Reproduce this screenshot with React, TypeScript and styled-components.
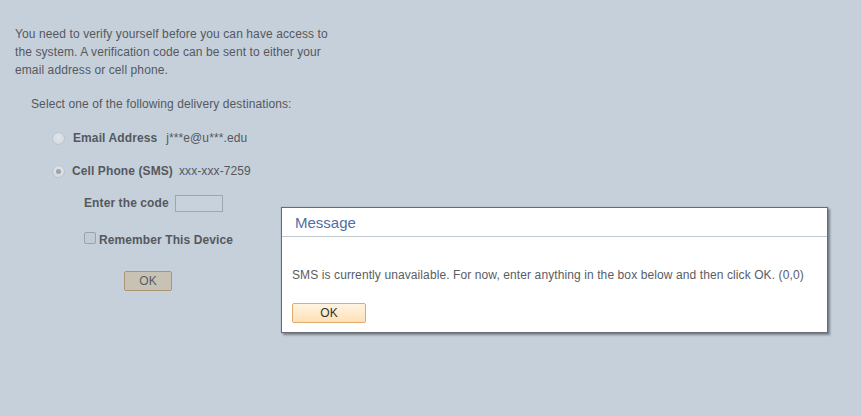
import React from "react";
import styled, { createGlobalStyle } from "styled-components";

const Global = createGlobalStyle`
  html, body { margin: 0; padding: 0; }
  body {
    background: #c5d0da;
    font-family: Arial, "Liberation Sans", sans-serif;
    font-size: 12px;
    letter-spacing: 0.1px;
    color: #55585e;
    width: 861px;
    height: 416px;
    overflow: hidden;
  }
`;

const Page = styled.div`
  position: relative;
  width: 861px;
  height: 416px;
  padding: 25px 0 0 15px;
  box-sizing: border-box;
`;

const Intro = styled.p`
  margin: 0;
  width: 325px;
  line-height: 18px;
`;

const Prompt = styled.div`
  margin: 17px 0 0 16px;
  line-height: 16px;
`;

const Options = styled.div`
  display: flex;
  flex-direction: column;
  gap: 17px;
  margin: 18px 0 0 37px;
`;

const Option = styled.label`
  display: flex;
  align-items: center;
  height: 16px;
`;

const Radio = styled.span<{ $checked?: boolean; $gap: number }>`
  width: 13px;
  height: 13px;
  margin-right: ${(p) => p.$gap}px;
  border-radius: 50%;
  border: 1px solid #bcc4cc;
  background: radial-gradient(circle at 50% 40%, #e2e6ea 0%, #d0d6dc 100%);
  box-sizing: border-box;
  display: flex;
  align-items: center;
  justify-content: center;
  &::after {
    content: "";
    width: 5px;
    height: 5px;
    border-radius: 50%;
    background: ${(p) => (p.$checked ? "#9ba2a9" : "transparent")};
  }
`;

const OptionLabel = styled.span<{ $gap: number }>`
  font-weight: bold;
  margin-right: ${(p) => p.$gap}px;
`;

const Value = styled.span``;

const Detail = styled.div`
  display: flex;
  flex-direction: column;
  margin: 16px 0 0 69px;
`;

const CodeRow = styled.div`
  display: flex;
  align-items: center;
  height: 18px;
  margin-top: -1px;
`;

const Bold = styled.span`
  font-weight: bold;
`;

const CodeInput = styled.span`
  display: inline-block;
  width: 48px;
  height: 17px;
  margin: 1px 0 0 6px;
  border: 1px solid #9ea6ae;
  box-sizing: border-box;
  background: #c8d2dc;
`;

const CheckRow = styled.label`
  display: flex;
  align-items: center;
  gap: 3px;
  margin-top: 20px;
  height: 16px;
`;

const Check = styled.span`
  width: 12px;
  height: 12px;
  border: 1px solid #9aa2aa;
  border-radius: 2px;
  background: #c2ccd6;
  box-sizing: border-box;
  margin-bottom: 4px;
`;

const PageOk = styled.button`
  margin: 23px 0 0 40px;
  width: 48px;
  height: 20px;
  padding: 0;
  font-family: Arial, "Liberation Sans", sans-serif;
  font-size: 12px;
  color: #5a5d63;
  background: #c7c2b4;
  border: 1px solid #ab9575;
  border-radius: 2px;
  box-sizing: border-box;
`;

const Dialog = styled.div`
  position: absolute;
  left: 281px;
  top: 207px;
  width: 547px;
  height: 126px;
  background: #ffffff;
  border: 1px solid #6a6e72;
  box-sizing: border-box;
  box-shadow: 2px 2px 2px rgba(60, 66, 74, 0.55), 0 0 1px rgba(60, 66, 74, 0.4);
  display: flex;
  flex-direction: column;
`;

const DialogHeader = styled.div`
  height: 29px;
  padding: 6px 0 0 13px;
  box-sizing: border-box;
  border-bottom: 1px solid #bfc7cf;
  font-size: 15px;
  letter-spacing: 0;
  color: #4f6ea6;
`;

const DialogBody = styled.div`
  padding: 31px 0 0 10px;
  display: flex;
  flex-direction: column;
  align-items: flex-start;
  color: #5a5d63;
`;

const DialogOk = styled.button`
  margin-top: 21px;
  width: 74px;
  height: 20px;
  padding: 0;
  font-family: Arial, "Liberation Sans", sans-serif;
  font-size: 12px;
  color: #333;
  background: linear-gradient(#fff4e1, #fde1b6);
  border: 1px solid #e3aa6e;
  border-radius: 2px;
  box-sizing: border-box;
`;

export default function App() {
  return (
    <Page>
      <Global />
      <Intro>
        You need to verify yourself before you can have access to the system. A
        verification code can be sent to either your email address or cell phone.
      </Intro>
      <Prompt>Select one of the following delivery destinations:</Prompt>
      <Options>
        <Option>
          <Radio $gap={8} />
          <span>
            <OptionLabel $gap={9}>Email Address</OptionLabel>
            <Value>j***e@u***.edu</Value>
          </span>
        </Option>
        <Option>
          <Radio $checked $gap={7} />
          <span>
            <OptionLabel $gap={6}>Cell Phone (SMS)</OptionLabel>
            <Value>xxx-xxx-7259</Value>
          </span>
        </Option>
      </Options>
      <Detail>
        <CodeRow>
          <Bold>Enter the code</Bold>
          <CodeInput />
        </CodeRow>
        <CheckRow>
          <Check />
          <Bold>Remember This Device</Bold>
        </CheckRow>
        <PageOk>OK</PageOk>
      </Detail>
      <Dialog>
        <DialogHeader>Message</DialogHeader>
        <DialogBody>
          <span>
            SMS is currently unavailable. For now, enter anything in the box below
            and then click OK. (0,0)
          </span>
          <DialogOk>OK</DialogOk>
        </DialogBody>
      </Dialog>
    </Page>
  );
}
